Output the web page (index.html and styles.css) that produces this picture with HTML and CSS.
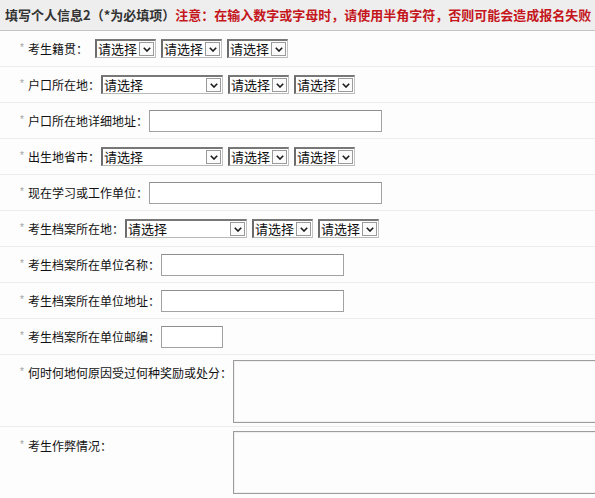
FILE: index.html
```html
<!DOCTYPE html>
<html lang="zh-CN">
<head>
<meta charset="utf-8">
<title>填写个人信息2</title>
<link rel="stylesheet" href="styles.css">
</head>
<body>
<div class="page">
  <div class="head">
    <span class="title">填写个人信息2（*为必填项）</span><span class="warn">注意：在输入数字或字母时，请使用半角字符，否则可能会造成报名失败</span>
  </div>

  <div class="row">
    <label class="lbl lbl-wide"><i class="req">*</i>考生籍贯：</label>
    <div class="ctrls">
      <span class="sel sm"><select><option>请选择</option></select><span class="btn"><svg viewBox="0 0 8 5" width="8" height="5"><polyline points="0.8,0.8 4,4 7.2,0.8"/></svg></span></span>
      <span class="sel sm"><select><option>请选择</option></select><span class="btn"><svg viewBox="0 0 8 5" width="8" height="5"><polyline points="0.8,0.8 4,4 7.2,0.8"/></svg></span></span>
      <span class="sel sm"><select><option>请选择</option></select><span class="btn"><svg viewBox="0 0 8 5" width="8" height="5"><polyline points="0.8,0.8 4,4 7.2,0.8"/></svg></span></span>
    </div>
  </div>

  <div class="row">
    <label class="lbl"><i class="req">*</i>户口所在地：</label>
    <div class="ctrls">
      <span class="sel lg"><select><option>请选择</option></select><span class="btn"><svg viewBox="0 0 8 5" width="8" height="5"><polyline points="0.8,0.8 4,4 7.2,0.8"/></svg></span></span>
      <span class="sel sm"><select><option>请选择</option></select><span class="btn"><svg viewBox="0 0 8 5" width="8" height="5"><polyline points="0.8,0.8 4,4 7.2,0.8"/></svg></span></span>
      <span class="sel sm"><select><option>请选择</option></select><span class="btn"><svg viewBox="0 0 8 5" width="8" height="5"><polyline points="0.8,0.8 4,4 7.2,0.8"/></svg></span></span>
    </div>
  </div>

  <div class="row">
    <label class="lbl"><i class="req">*</i>户口所在地详细地址：</label>
    <input class="txt t-long" type="text">
  </div>

  <div class="row">
    <label class="lbl"><i class="req">*</i>出生地省市：</label>
    <div class="ctrls">
      <span class="sel lg"><select><option>请选择</option></select><span class="btn"><svg viewBox="0 0 8 5" width="8" height="5"><polyline points="0.8,0.8 4,4 7.2,0.8"/></svg></span></span>
      <span class="sel sm"><select><option>请选择</option></select><span class="btn"><svg viewBox="0 0 8 5" width="8" height="5"><polyline points="0.8,0.8 4,4 7.2,0.8"/></svg></span></span>
      <span class="sel sm"><select><option>请选择</option></select><span class="btn"><svg viewBox="0 0 8 5" width="8" height="5"><polyline points="0.8,0.8 4,4 7.2,0.8"/></svg></span></span>
    </div>
  </div>

  <div class="row">
    <label class="lbl"><i class="req">*</i>现在学习或工作单位：</label>
    <input class="txt t-long" type="text">
  </div>

  <div class="row">
    <label class="lbl"><i class="req">*</i>考生档案所在地：</label>
    <div class="ctrls">
      <span class="sel lg"><select><option>请选择</option></select><span class="btn"><svg viewBox="0 0 8 5" width="8" height="5"><polyline points="0.8,0.8 4,4 7.2,0.8"/></svg></span></span>
      <span class="sel sm"><select><option>请选择</option></select><span class="btn"><svg viewBox="0 0 8 5" width="8" height="5"><polyline points="0.8,0.8 4,4 7.2,0.8"/></svg></span></span>
      <span class="sel sm"><select><option>请选择</option></select><span class="btn"><svg viewBox="0 0 8 5" width="8" height="5"><polyline points="0.8,0.8 4,4 7.2,0.8"/></svg></span></span>
    </div>
  </div>

  <div class="row">
    <label class="lbl"><i class="req">*</i>考生档案所在单位名称：</label>
    <input class="txt t-mid" type="text">
  </div>

  <div class="row">
    <label class="lbl"><i class="req">*</i>考生档案所在单位地址：</label>
    <input class="txt t-mid" type="text">
  </div>

  <div class="row">
    <label class="lbl"><i class="req">*</i>考生档案所在单位邮编：</label>
    <input class="txt t-short" type="text">
  </div>

  <div class="row row-tall">
    <label class="lbl"><i class="req">*</i>何时何地何原因受过何种奖励或处分：</label>
    <textarea class="area"></textarea>
  </div>

  <div class="row row-tall">
    <label class="lbl lbl-area"><i class="req">*</i>考生作弊情况：</label>
    <textarea class="area"></textarea>
  </div>
</div>
</body>
</html>
```

FILE: styles.css
```css
html, body {
  margin: 0;
  padding: 0;
  overflow: hidden;
  background: #fdfdfe;
}

.page {
  width: 595px;
  height: 498px;
  overflow: hidden;
  font-family: "Noto Sans CJK SC", "Liberation Sans", sans-serif;
  font-size: 12px;
  color: #111;
}

.head {
  height: 30px;
  line-height: 30px;
  padding-left: 5px;
  background: #eeeeee;
  border-bottom: 1px solid #c4c4c4;
  font-size: 13px;
  font-weight: bold;
  white-space: nowrap;
}

.title {
  color: #333;
}

.warn {
  color: #c4161c;
}

.row {
  display: flex;
  align-items: center;
  height: 35px;
  padding-left: 20px;
  border-bottom: 1px solid #ececec;
}

.lbl {
  display: inline-flex;
  align-items: center;
  line-height: 16px;
  margin-right: 1px;
  white-space: nowrap;
  color: #111;
}

.lbl-wide {
  margin-right: 7px;
}

.req {
  display: inline-block;
  width: 8px;
  font-style: normal;
  font-family: "Liberation Sans", sans-serif;
  font-size: 10px;
  color: #a0a0a0;
  align-self: flex-start;
  margin-top: -1px;
}

.ctrls {
  display: flex;
  gap: 5px;
}

.sel {
  display: inline-flex;
  align-items: center;
  height: 19px;
  box-sizing: border-box;
  border-top: 2px solid #787878;
  border-left: 2px solid #6c6c6c;
  border-right: 1px solid #c2c2c2;
  border-bottom: 1px solid #b8b8b8;
  background: #fff;
}

.sel.sm {
  width: 61px;
}

.sel.lg {
  width: 122px;
}

.sel select {
  flex: 1;
  min-width: 0;
  appearance: none;
  -webkit-appearance: none;
  border: 0;
  padding: 0 0 0 1px;
  margin: 0;
  background: transparent;
  font: inherit;
  font-size: 13px;
  line-height: 16px;
  color: #111;
  outline: none;
}

.btn {
  display: flex;
  align-items: center;
  justify-content: center;
  width: 15px;
  height: 14px;
  margin-right: 1px;
  box-sizing: border-box;
  border: 1px solid #9a9a9a;
  background: #fbfbfb;
}

.btn svg {
  display: block;
}

.btn polyline {
  fill: none;
  stroke: #1a1a1a;
  stroke-width: 1.6;
}

.txt {
  height: 22px;
  box-sizing: border-box;
  margin: 0;
  padding: 0 2px;
  border: 1px solid #a2a2a2;
  border-top-color: #8f8f8f;
  background: #fff;
  font: inherit;
}

.t-long {
  width: 233px;
}

.t-mid {
  width: 183px;
}

.t-short {
  width: 62px;
}

.row-tall {
  height: auto;
  align-items: flex-start;
  padding-top: 5px;
  padding-bottom: 3px;
}

.row-tall + .row-tall {
  padding-top: 4px;
  border-bottom: 0;
}

.row-tall .lbl {
  width: 212px;
  flex: none;
  padding-top: 5px;
}

.row-tall .lbl-area {
  padding-top: 7px;
}

.area {
  flex: none;
  width: 400px;
  height: 63px;
  box-sizing: border-box;
  margin: 0;
  padding: 2px;
  border: 1px solid #9c9c9c;
  box-shadow: inset 0 0 0 1px #f0f0f2;
  background: #fdfdfe;
  resize: none;
  font: inherit;
}
```
